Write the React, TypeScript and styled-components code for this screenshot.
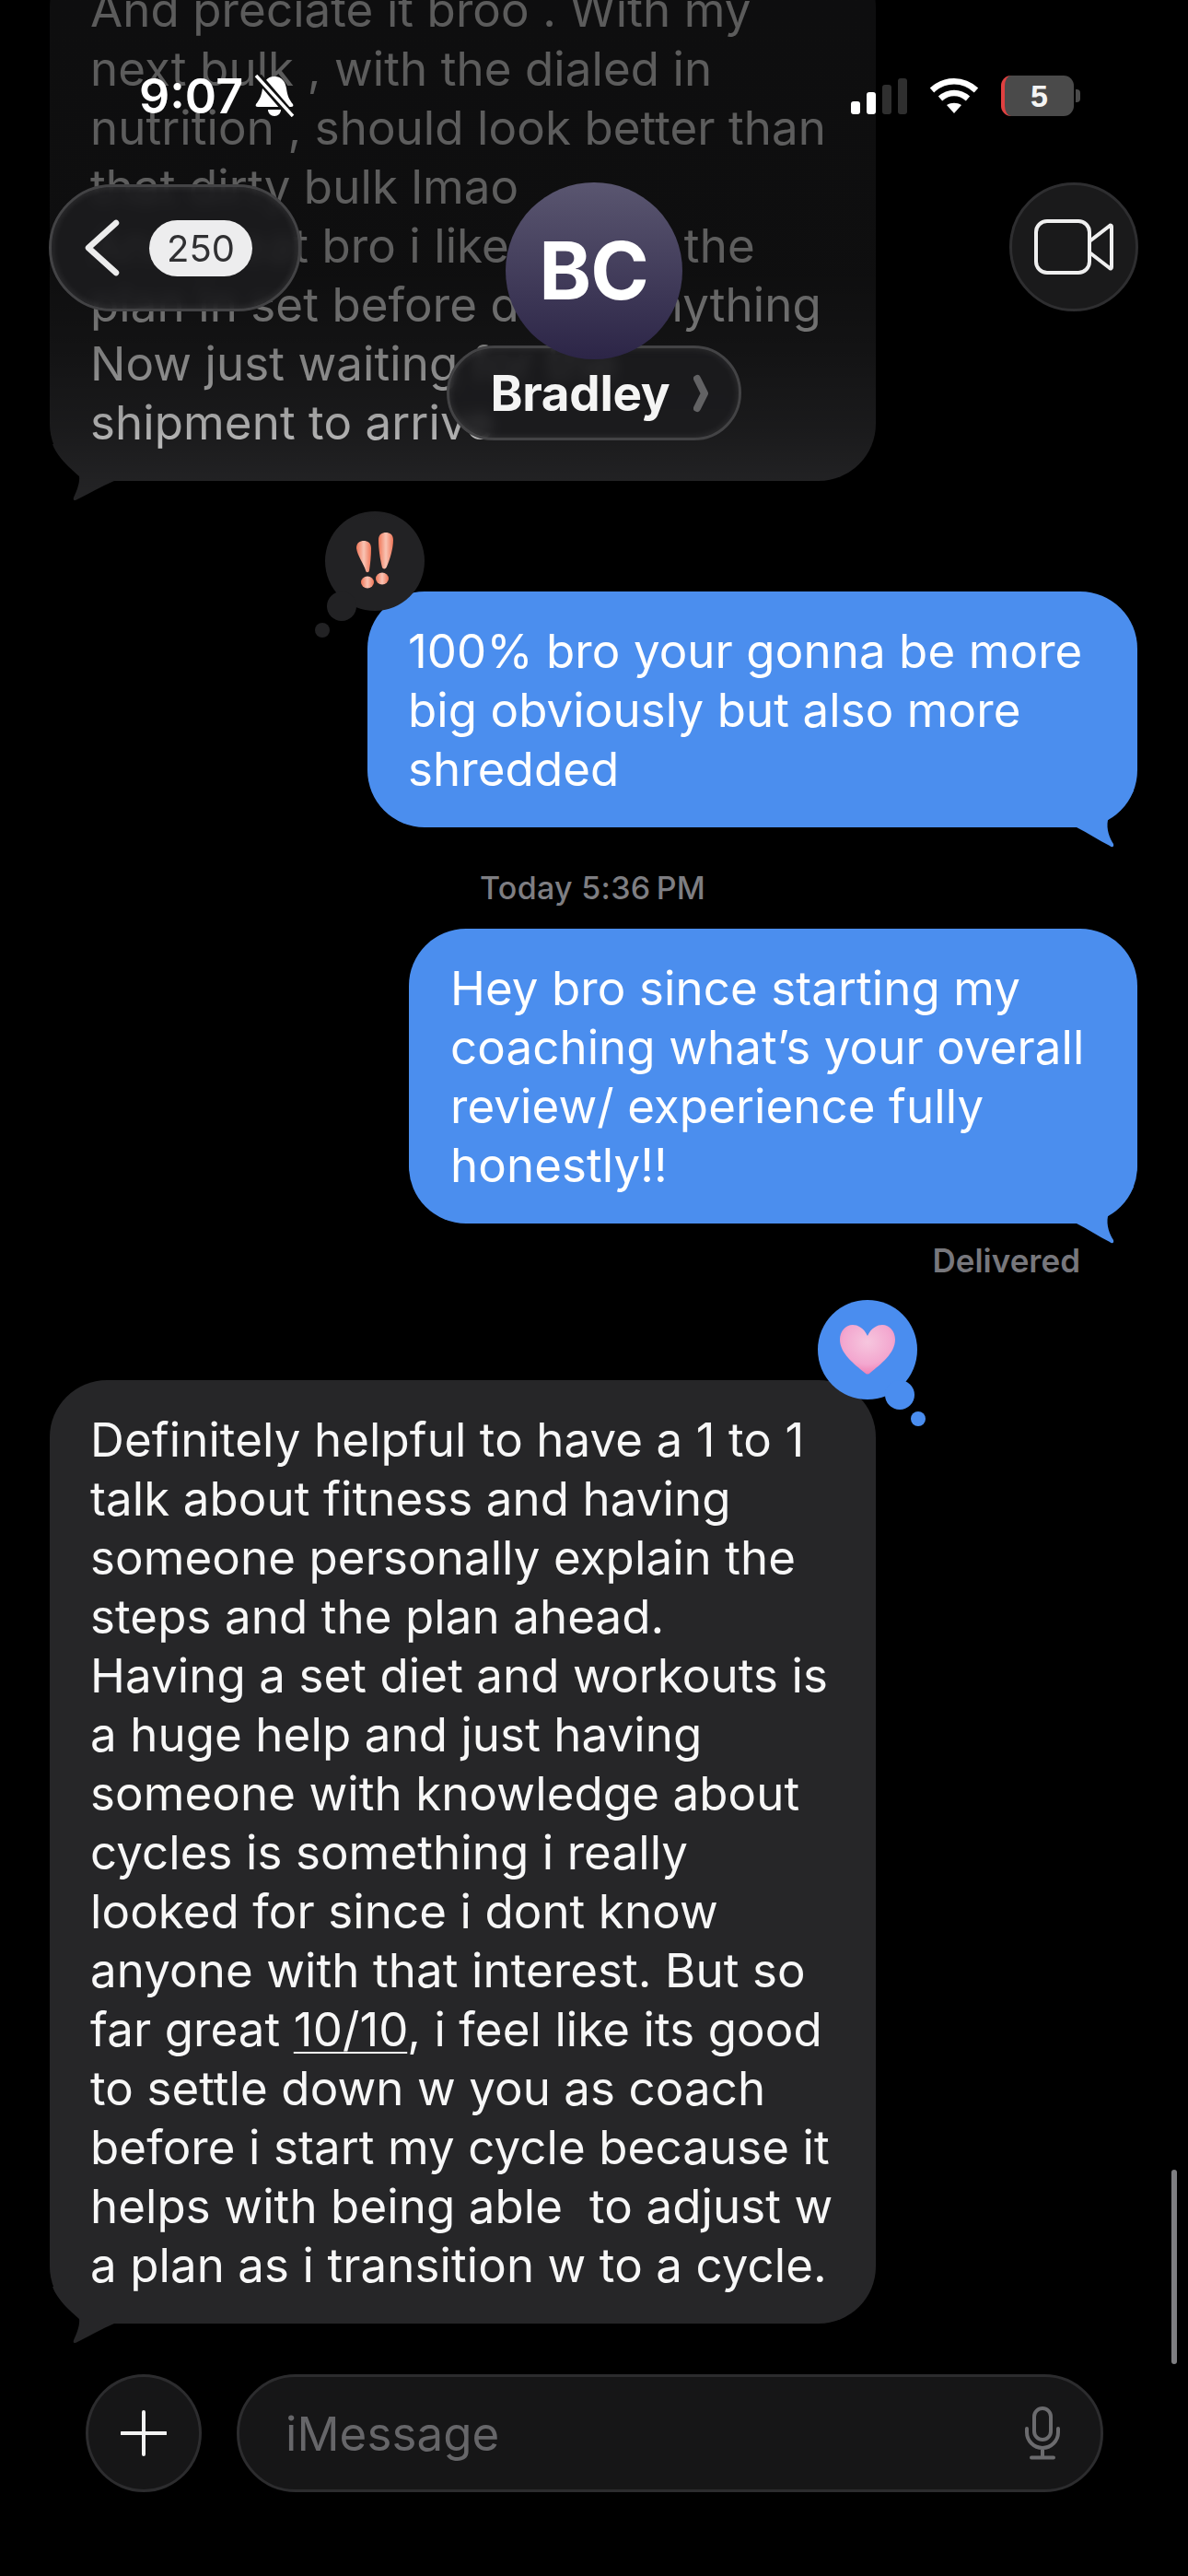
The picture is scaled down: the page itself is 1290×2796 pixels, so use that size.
import styled, { createGlobalStyle } from 'styled-components';

const GlobalStyle = createGlobalStyle`
  html, body {
    margin: 0;
    padding: 0;
    background: #000;
  }
  * {
    box-sizing: border-box;
  }
`;

const bodyFont = `Inter, "Liberation Sans", sans-serif`;

const oldLines = [
  'And preciate it broo . With my',
  'next bulk , with the dialed in',
  'nutrition , should look better than',
  'that dirty bulk lmao',
  'And great bro i like having the',
  'plan in set before doing anything',
  'Now just waiting for the',
  'shipment to arrive',
];

const App: React.FC = () => {
  return (
    <Page>
      <GlobalStyle />
      <Thread>
        <IncomingBubble $first>
          {oldLines.map((line) => (
            <Line key={line}>{line}</Line>
          ))}
          <GrayTail />
        </IncomingBubble>

        <OutgoingBubble $top={120} $width={836} $pad={45}>
          <Tapback $bg="#222224" $side="left">
            <ExclaimIcon />
          </Tapback>
          <Line>100% bro your gonna be more</Line>
          <Line>big obviously but also more</Line>
          <Line>shredded</Line>
          <BlueTail />
        </OutgoingBubble>

        <Timestamp>Today 5:36&#8201;PM</Timestamp>

        <OutgoingBubble $top={23} $width={791} $pad={46}>
          <Line>Hey bro since starting my</Line>
          <Line>coaching what’s your overall</Line>
          <Line>review/ experience fully</Line>
          <Line>honestly!!</Line>
          <BlueTail />
        </OutgoingBubble>

        <Delivered>Delivered</Delivered>

        <IncomingBubble $top={109}>
          <Tapback $bg="#4a8def" $side="right">
            <HeartIcon />
          </Tapback>
          <Line>Definitely helpful to have a 1 to 1</Line>
          <Line>talk about fitness and having</Line>
          <Line>someone personally explain the</Line>
          <Line>steps and the plan ahead.</Line>
          <Line>Having a set diet and workouts is</Line>
          <Line>a huge help and just having</Line>
          <Line>someone with knowledge about</Line>
          <Line>cycles is something i really</Line>
          <Line>looked for since i dont know</Line>
          <Line>anyone with that interest. But so</Line>
          <Line>
            far great <LinkText>10/10</LinkText>, i feel like its good
          </Line>
          <Line>to settle down w you as coach</Line>
          <Line>before i start my cycle because it</Line>
          <Line>helps with being able&nbsp; to adjust w</Line>
          <Line>a plan as i transition w to a cycle.</Line>
          <GrayTail />
        </IncomingBubble>
      </Thread>

      <Composer>
        <PlusButton>
          <svg width="50" height="50" viewBox="0 0 50 50" fill="none" stroke="#f2f2f2" strokeWidth="4" strokeLinecap="round">
            <path d="M25 2v46M1 25h48" />
          </svg>
        </PlusButton>
        <InputPill>
          <Placeholder>iMessage</Placeholder>
          <svg width="38" height="58" viewBox="0 0 38 58" fill="none" stroke="#6b6b6e" strokeWidth="4" strokeLinecap="round">
            <rect x="10" y="2" width="18" height="34" rx="9" />
            <path d="M2 24v4a17 17 0 0 0 34 0v-4M19 45v10M7 55.5h24" />
          </svg>
        </InputPill>
      </Composer>

      <Scrim />
      <Header>
        <StatusBar>
          <Clock>
            9:07
            <svg width="44" height="46" viewBox="0 0 44 46">
              <path d="M22 2c-8 0-12 6-13 13-1 8-3 12-7 17-1 2 0 3 2 3h36c2 0 3-1 2-3-4-5-6-9-7-17-1-7-5-13-13-13z" fill="#fff" />
              <path d="M15 38h14c0 4-3 7-7 7s-7-3-7-7z" fill="#fff" />
              <path d="M3 1l38 44" stroke="#111" strokeWidth="9" />
              <path d="M2 1l40 44" stroke="#fff" strokeWidth="3.5" />
            </svg>
          </Clock>
          <StatusIcons>
            <Signal>
              <SignalBar $h={14} $on />
              <SignalBar $h={24} $on />
              <SignalBar $h={32} />
              <SignalBar $h={39} />
            </Signal>
            <svg width="54" height="40" viewBox="0 0 54 40" fill="none" stroke="#fff" strokeWidth="6.5">
              <path d="M3 14c14-13 34-13 48 0" />
              <path d="M12 23c9-8 21-8 30 0" />
              <path d="M27 39l-8-9c5-3 11-3 16 0z" fill="#fff" stroke="none" />
            </svg>
            <Battery>
              5
              <BatteryNub />
            </Battery>
          </StatusIcons>
        </StatusBar>

        <NavRow>
          <BackPill>
            <svg width="38" height="62" viewBox="0 0 38 62" fill="none" stroke="#ececec" strokeWidth="6.5" strokeLinecap="round" strokeLinejoin="round">
              <path d="M34 4L4 31l30 27" />
            </svg>
            <CountBadge>250</CountBadge>
          </BackPill>
          <Contact>
            <Avatar>BC</Avatar>
            <NamePill>
              Bradley
              <svg width="16" height="42" viewBox="0 0 16 42" fill="none" stroke="#626264" strokeWidth="8" strokeLinecap="round" strokeLinejoin="round">
                <path d="M4 5l8 16-8 16" />
              </svg>
            </NamePill>
          </Contact>
          <VideoButton>
            <svg width="86" height="60" viewBox="0 0 86 60" fill="none" stroke="#efefef" strokeWidth="4" strokeLinejoin="round">
              <rect x="2" y="2" width="58" height="56" rx="12" />
              <path d="M60 24l22-17c1-1 2 0 2 1v44c0 1-1 2-2 1L60 36z" />
            </svg>
          </VideoButton>
        </NavRow>
      </Header>
      <ScrollThumb />
    </Page>
  );
};

const GrayTail = () => (
  <TailSvg $side="left" width="70" height="62" viewBox="0 0 70 62">
    <path d="M3 0C8 14 22 26 32 35 33 42 29 52 26 58 25 61 27 62 30 60 42 54 56 46 70 40V0z" fill="#262628" />
  </TailSvg>
);

const BlueTail = () => (
  <TailSvg $side="right" width="70" height="62" viewBox="0 0 70 62">
    <path d="M66 0C60 14 44 22 38 32 36 42 40 52 44 58 45 62 42 62 40 60 28 54 16 46 4 40V0z" fill="#4b8eee" />
  </TailSvg>
);

const ExclaimIcon = () => (
  <svg width="44" height="66" viewBox="0 0 44 66">
    <defs>
      <linearGradient id="bang" x1="0" y1="0" x2="1" y2="0">
        <stop offset="0" stopColor="#ef7658" />
        <stop offset="0.5" stopColor="#f9c4b4" />
        <stop offset="1" stopColor="#ef7658" />
      </linearGradient>
    </defs>
    <path d="M2 19C2 13 6 11 10 11 14 11 18 13 18 19 18 28 17 36 16 43 15.500 46 12.500 46 12 43 10 36 3 27 2 19z" fill="url(#bang)" />
    <path d="M26 10C26 4 30 2 34 2 38 2 42 4 42 10 42 20 38 32 35 39 34 42 31 42 30 40 28 32 26 20 26 10z" fill="url(#bang)" />
    <ellipse cx="14" cy="56" rx="7" ry="6.500" fill="url(#bang)" />
    <ellipse cx="30" cy="52" rx="7" ry="6.500" fill="url(#bang)" />
  </svg>
);

const HeartIcon = () => (
  <svg width="60" height="54" viewBox="0 0 60 54">
    <defs>
      <radialGradient id="heart" cx="0.5" cy="0.35" r="0.75">
        <stop offset="0" stopColor="#f6c6de" />
        <stop offset="0.6" stopColor="#f3a7cf" />
        <stop offset="1" stopColor="#ee6fa8" />
      </radialGradient>
    </defs>
    <path d="M30 12C26 3 19 0 14 0 6 0 0 7 0 16c0 15 16 27 27 36 2 2 4 2 6 0 11-9 27-21 27-36C60 7 54 0 46 0c-5 0-12 3-16 12z" fill="url(#heart)" />
  </svg>
);

export default App;

const Page = styled.div`
  position: relative;
  width: 1290px;
  height: 2796px;
  overflow: hidden;
  background: #000;
  font-family: ${bodyFont};
  color: #fff;
`;

const Thread = styled.main`
  display: flex;
  flex-direction: column;
  margin-top: -54px;
  padding: 0 55px 0 54px;
`;

const Line = styled.span`
  display: block;
  height: 64px;
  font-size: 51px;
  line-height: 64px;
  letter-spacing: 0.1px;
  white-space: nowrap;
`;

const IncomingBubble = styled.div<{ $first?: boolean; $top?: number }>`
  position: relative;
  align-self: flex-start;
  width: 897px;
  margin-top: ${(p) => p.$top ?? 0}px;
  padding: 33px 44px 31px;
  border-radius: 62px;
  background: #262628;
  color: #f7f7f7;
`;

const OutgoingBubble = styled.div<{ $top: number; $width: number; $pad: number }>`
  position: relative;
  align-self: flex-end;
  width: ${(p) => p.$width}px;
  margin-top: ${(p) => p.$top}px;
  padding: 33px ${(p) => p.$pad - 1}px 31px;
  border-radius: 62px;
  background: #4b8eee;
  color: #fff;
`;

const TailSvg = styled.svg<{ $side: 'left' | 'right' }>`
  position: absolute;
  bottom: -22px;
  ${(p) => (p.$side === 'left' ? 'left: 0;' : 'right: 0;')}
`;

const Tapback = styled.div<{ $bg: string; $side: 'left' | 'right' }>`
  position: absolute;
  top: -87px;
  ${(p) => (p.$side === 'left' ? 'left: -46px;' : 'right: -45px;')}
  display: flex;
  align-items: center;
  justify-content: center;
  width: 108px;
  height: 108px;
  border-radius: 50%;
  background: ${(p) => p.$bg};

  &::before {
    content: '';
    position: absolute;
    width: 32px;
    height: 32px;
    border-radius: 50%;
    background: ${(p) => p.$bg};
    top: 87px;
    ${(p) => (p.$side === 'left' ? 'left: 2px;' : 'right: 3px;')}
  }

  &::after {
    content: '';
    position: absolute;
    width: 16px;
    height: 16px;
    border-radius: 50%;
    background: ${(p) => p.$bg};
    top: 121px;
    ${(p) => (p.$side === 'left' ? 'left: -11px;' : 'right: -9px;')}
  }
`;

const Timestamp = styled.div`
  margin: 46px 0 0 467px;
  height: 41px;
  font-size: 34px;
  line-height: 40px;
  font-weight: 500;
  letter-spacing: 0.3px;
  color: #7e7e82;
`;

const Delivered = styled.div`
  align-self: flex-end;
  margin: 20px 62px 0 0;
  height: 41px;
  font-size: 35px;
  line-height: 41px;
  font-weight: 600;
  color: #77777c;
`;

const LinkText = styled.span`
  text-decoration: underline;
  text-decoration-thickness: 2px;
  text-underline-offset: 6px;
`;

const Composer = styled.footer`
  display: flex;
  gap: 38px;
  margin-top: 55px;
  padding: 0 92px 0 93px;
`;

const PlusButton = styled.div`
  display: flex;
  align-items: center;
  justify-content: center;
  flex: 0 0 126px;
  height: 128px;
  border-radius: 50%;
  border: 3px solid #2c2c2e;
  background: #161617;
`;

const InputPill = styled.div`
  flex: 1;
  display: flex;
  align-items: center;
  justify-content: space-between;
  height: 128px;
  padding: 0 44px 0 50px;
  border-radius: 64px;
  border: 3px solid #2c2c2e;
  background: #161617;
`;

const Placeholder = styled.span`
  font-size: 51px;
  letter-spacing: 0.1px;
  color: #666669;
`;

const Scrim = styled.div`
  position: absolute;
  top: 0;
  left: 0;
  width: 100%;
  height: 570px;
  background: linear-gradient(
    to bottom,
    rgba(0, 0, 0, 0.63) 0,
    rgba(0, 0, 0, 0.62) 300px,
    rgba(0, 0, 0, 0.5) 380px,
    rgba(0, 0, 0, 0.3) 470px,
    rgba(0, 0, 0, 0.1) 525px,
    rgba(0, 0, 0, 0) 570px
  );
`;

const Header = styled.header`
  position: absolute;
  top: 0;
  left: 0;
  width: 100%;
`;

const StatusBar = styled.div`
  display: flex;
  justify-content: space-between;
  align-items: center;
  height: 44px;
  margin-top: 82px;
  padding: 0 124px 0 151px;
`;

const Clock = styled.div`
  display: flex;
  align-items: center;
  gap: 12px;
  font-size: 52px;
  font-weight: 600;
  letter-spacing: 0;
  color: #fff;
`;

const StatusIcons = styled.div`
  display: flex;
  align-items: center;
  gap: 24px;
`;

const Signal = styled.div`
  display: flex;
  align-items: flex-end;
  gap: 7px;
  height: 39px;
`;

const SignalBar = styled.i<{ $h: number; $on?: boolean }>`
  display: block;
  width: 10px;
  height: ${(p) => p.$h}px;
  border-radius: 3px;
  background: ${(p) => (p.$on ? '#fff' : '#2f2f2f')};
`;

const Battery = styled.div`
  position: relative;
  display: flex;
  align-items: center;
  justify-content: center;
  width: 79px;
  height: 44px;
  border-radius: 11px;
  border-left: 4px solid #e04040;
  background: #4a4a4a;
  font-family: 'Liberation Sans', sans-serif;
  font-size: 34px;
  font-weight: 700;
  color: #f4f4f4;
`;

const BatteryNub = styled.i`
  position: absolute;
  right: -7px;
  top: 15px;
  width: 5px;
  height: 14px;
  border-radius: 0 4px 4px 0;
  background: #4a4a4a;
`;

const NavRow = styled.div`
  display: grid;
  grid-template-columns: 1fr auto 1fr;
  align-items: start;
  margin-top: 72px;
  padding: 0 54px 0 53px;
`;

const BackPill = styled.div`
  display: flex;
  align-items: center;
  gap: 32px;
  justify-self: start;
  width: 274px;
  height: 138px;
  margin-top: 2px;
  padding-left: 36px;
  border-radius: 69px;
  border: 3px solid #434345;
  background: rgba(29, 29, 31, 0.84);
  box-shadow: inset 0 0 8px rgba(255, 255, 255, 0.12);
  backdrop-filter: blur(7px);
`;

const CountBadge = styled.span`
  width: 112px;
  height: 61px;
  border-radius: 31px;
  background: #ededee;
  font-size: 40px;
  line-height: 61px;
  text-align: center;
  color: #303032;
`;

const Contact = styled.div`
  display: flex;
  flex-direction: column;
  align-items: center;
`;

const Avatar = styled.div`
  position: relative;
  z-index: 1;
  display: flex;
  align-items: center;
  justify-content: center;
  width: 192px;
  height: 192px;
  border-radius: 50%;
  background: linear-gradient(to bottom, #5a5670, #2c2547);
  font-size: 86px;
  font-weight: 700;
  letter-spacing: -1px;
  color: #fff;
`;

const NamePill = styled.div`
  display: flex;
  align-items: center;
  gap: 26px;
  width: 320px;
  height: 103px;
  margin-top: -15px;
  padding: 0 0 0 45px;
  border-radius: 52px;
  border: 3px solid #434345;
  background: rgba(28, 28, 30, 0.8);
  box-shadow: inset 0 0 8px rgba(255, 255, 255, 0.1);
  backdrop-filter: blur(7px);
  font-size: 53px;
  font-weight: 700;
  letter-spacing: -0.3px;
  color: #f4f4f4;
`;

const VideoButton = styled.div`
  display: flex;
  align-items: center;
  justify-content: center;
  justify-self: end;
  width: 140px;
  height: 140px;
  border-radius: 50%;
  border: 3px solid #2e2e30;
  background: #1a1a1b;
`;

const ScrollThumb = styled.div`
  position: absolute;
  top: 2355px;
  right: 12px;
  width: 6px;
  height: 211px;
  border-radius: 3px;
  background: #7f7f82;
`;
